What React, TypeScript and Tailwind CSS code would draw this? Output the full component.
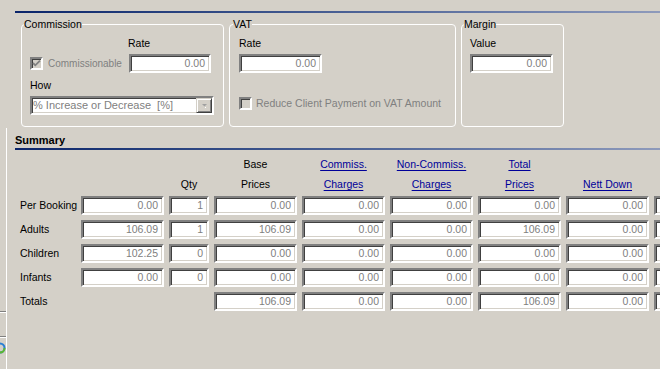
import React from "react";

const sunken =
  "border-2 border-t-[#808080] border-l-[#808080] border-b-white border-r-white shadow-[inset_1px_1px_0_#404040,inset_-1px_-1px_0_#d4d0c8]";

const Box = ({ value, className = "w-[83px]" }: { value: string; className?: string }) => {
  return (
    <div className={`${sunken} ${className} shrink-0 h-[19px] bg-white flex items-center justify-end pr-[4px] text-[#808080] leading-none`}>
      {value}
    </div>
  );
};

const Check = ({ checked }: { checked?: boolean }) => {
  return (
    <div className={`${sunken} w-[13px] h-[13px] shrink-0 bg-[#d4d0c8] flex items-center justify-center`}>
      {checked && (
        <svg width="9" height="9" viewBox="0 0 9 9">
          <path d="M1 4 L3.3 6.3 L8 1.6" stroke="#808080" strokeWidth="1.8" fill="none" />
        </svg>
      )}
    </div>
  );
};

const GroupBox = ({ title, className, children }: { title: string; className: string; children: React.ReactNode }) => {
  return (
    <fieldset className={`border border-white rounded-[4px] ${className}`}>
      <legend className="-ml-[6px] leading-[13px]">{title}</legend>
      {children}
    </fieldset>
  );
};

const Link = ({ children }: { children: React.ReactNode }) => (
  <span className="text-[#000099] underline underline-offset-[2px]">{children}</span>
);

const cols = ["w-[83px]", "w-[40px]", "w-[83px]", "w-[83px]", "w-[83px]", "w-[83px]", "w-[83px]", "w-[83px]"];

const rows: { label: string; values: (string | null)[] }[] = [
  { label: "Per Booking", values: ["0.00", "1", "0.00", "0.00", "0.00", "0.00", "0.00", ""] },
  { label: "Adults", values: ["106.09", "1", "106.09", "0.00", "0.00", "106.09", "0.00", ""] },
  { label: "Children", values: ["102.25", "0", "0.00", "0.00", "0.00", "0.00", "0.00", ""] },
  { label: "Infants", values: ["0.00", "0", "0.00", "0.00", "0.00", "0.00", "0.00", ""] },
  { label: "Totals", values: [null, null, "106.09", "0.00", "0.00", "106.09", "0.00", ""] },
];

const headerTop: React.ReactNode[] = [null, null, "Base", <Link>Commiss.</Link>, <Link>Non-Commiss.</Link>, <Link>Total</Link>, null, null];
const headerBottom: React.ReactNode[] = [null, "Qty", "Prices", <Link>Charges</Link>, <Link>Charges</Link>, <Link>Prices</Link>, <Link>Nett Down</Link>, null];

const HeaderRow = ({ items, className }: { items: React.ReactNode[]; className: string }) => (
  <div className={`flex gap-[5px] pl-[5px] h-[14px] leading-[14px] ${className}`}>
    <div className="w-[56px] shrink-0" />
    {items.map((it, i) => (
      <div key={i} className={`${cols[i]} shrink-0 text-center whitespace-nowrap`}>
        {it}
      </div>
    ))}
  </div>
);

export default function App() {
  return (
    <div className="w-[660px] h-[369px] overflow-hidden bg-[#d4d0c8] flex text-[10.5px] text-black font-['Liberation_Sans',Arial,sans-serif]">
      {/* neighbouring pane edge */}
      <div className="w-[6px] shrink-0 flex flex-col">
        <div className="h-[311px]" />
        <div className="h-px bg-[#808080]" />
        <div className="h-px bg-white" />
        <div className="h-[23px]" />
        <div className="h-px bg-[#808080]" />
        <div className="h-px bg-white" />
        <div className="mt-[4px] overflow-hidden w-[6px] h-[12px]">
          <svg width="12" height="12" viewBox="0 0 12 12" className="-ml-[6px]">
            <circle cx="6" cy="6" r="4.5" stroke="#2a7fd4" strokeWidth="2" fill="none" />
            <path d="M10.5 6 A4.5 4.5 0 0 1 6 10.5" stroke="#5cb82e" strokeWidth="2" fill="none" />
          </svg>
        </div>
      </div>
      <div className="w-px shrink-0 flex flex-col">
        <div className="h-[128px]" />
        <div className="flex-1 bg-white" />
      </div>

      <div className="flex-1 min-w-0 pl-[8px] flex flex-col">
        <div className="mt-[11px] h-[2px] bg-gradient-to-r from-[#0a246a] to-[#8e9abb]" />

        <div className="flex gap-[5px] ml-[6px] mt-[5px] items-stretch">
          <GroupBox title="Commission" className="w-[203px] px-[8px] pt-[5px] pb-[11px]">
            <div className="flex flex-col">
              <div className="flex h-[14px] leading-[14px]">
                <div className="w-[98px]" />
                <div>Rate</div>
              </div>
              <div className="flex mt-[4px] items-center">
                <div className="w-[99px] flex items-center gap-[5px] text-[#808080] whitespace-nowrap">
                  <Check checked />
                  <span className="text-[10px]">Commissionable</span>
                </div>
                <Box value="0.00" className="w-[82px]" />
              </div>
              <div className="mt-[5px] h-[14px] leading-[14px]">How</div>
              <div className={`${sunken} mt-[4px] h-[19px] w-[184px] bg-white flex items-center`}>
                <span className="pl-[1px] flex-1 text-[#808080] text-[11px] whitespace-pre leading-none">% Increase or Decrease  [%]</span>
                <div className="w-[16px] h-[15px] bg-[#d4d0c8] border border-t-[#d4d0c8] border-l-[#d4d0c8] border-b-[#404040] border-r-[#404040] shadow-[inset_1px_1px_0_#ffffff,inset_-1px_-1px_0_#808080] flex items-center justify-center">
                  <svg width="7" height="5" viewBox="0 0 7 5">
                    <path d="M1 1h5L3.5 3.5z" fill="#a0a0a0" />
                    <path d="M4 4.5h1" stroke="#ffffff" strokeWidth="1" />
                  </svg>
                </div>
              </div>
            </div>
          </GroupBox>

          <GroupBox title="VAT" className="w-[227px] px-[9px] pt-[5px] pb-[11px]">
            <div className="flex flex-col">
              <div className="h-[14px] leading-[14px]">Rate</div>
              <Box value="0.00" className="w-[83px] mt-[4px]" />
              <div className="mt-[23px] h-[15px] flex items-center gap-[4px] text-[#808080] whitespace-nowrap">
                <Check />
                <span>Reduce Client Payment on VAT Amount</span>
              </div>
            </div>
          </GroupBox>

          <GroupBox title="Margin" className="w-[103px] px-[8px] pt-[5px] pb-[11px]">
            <div className="flex flex-col">
              <div className="h-[14px] leading-[14px]">Value</div>
              <Box value="0.00" className="w-[83px] mt-[4px]" />
            </div>
          </GroupBox>
        </div>

        <div className="mt-[6px] h-[15px] leading-[14px] font-bold text-[11px]">Summary</div>
        <div className="h-[2px] bg-gradient-to-r from-[#0a246a] to-[#8e9abb]" />

        <HeaderRow items={headerTop} className="mt-[7px]" />
        <HeaderRow items={headerBottom} className="mt-[6px]" />

        <div className="mt-[5px] flex flex-col gap-[5px]">
          {rows.map((r) => (
            <div key={r.label} className="flex gap-[5px] pl-[5px] items-center">
              <div className="w-[56px] shrink-0 leading-[19px] whitespace-nowrap">{r.label}</div>
              {r.values.map((v, i) =>
                v === null ? (
                  <div key={i} className={`${cols[i]} shrink-0 h-[19px]`} />
                ) : (
                  <Box key={i} value={v} className={cols[i]} />
                )
              )}
            </div>
          ))}
        </div>
      </div>
    </div>
  );
}
